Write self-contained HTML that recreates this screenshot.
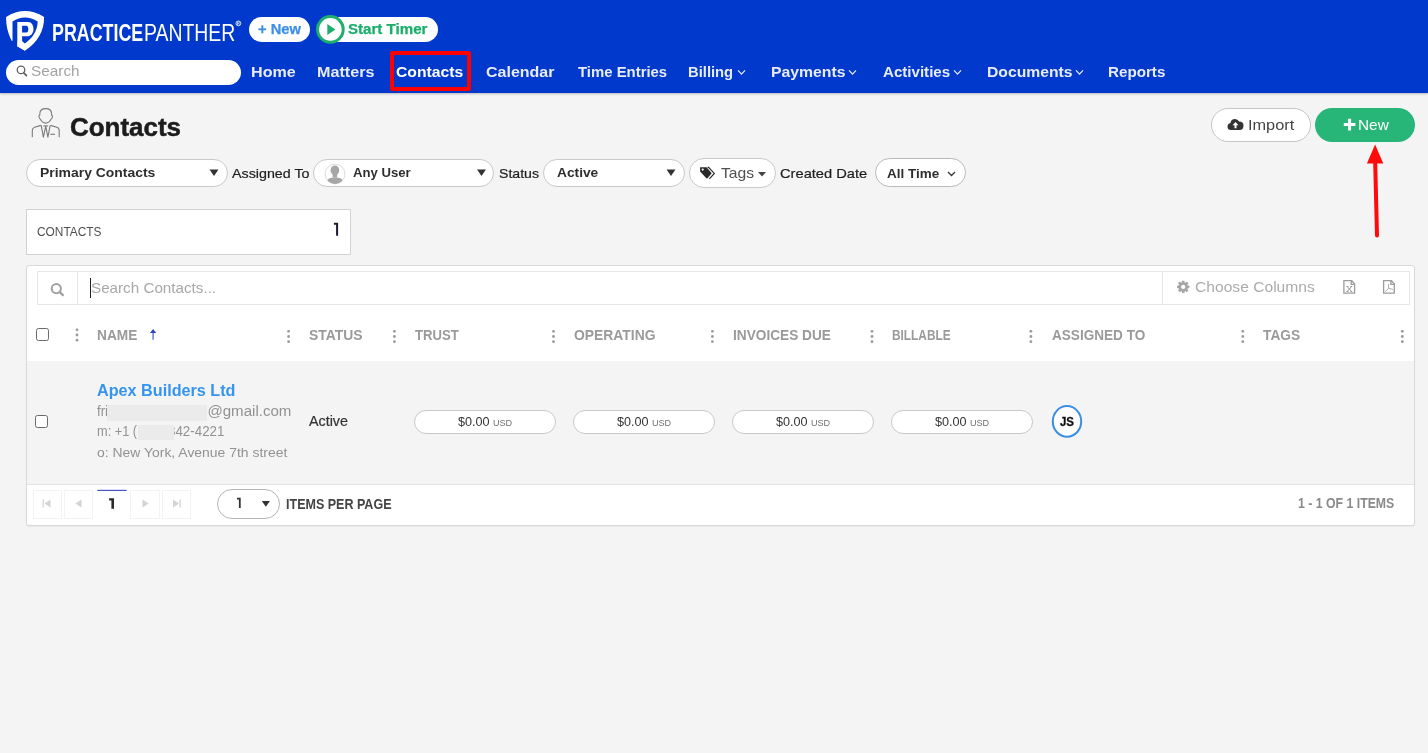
<!DOCTYPE html>
<html><head><meta charset="utf-8"><title>Contacts</title>
<style>
html,body{margin:0;padding:0;}
body{width:1428px;height:753px;overflow:hidden;position:relative;background:#f4f4f4;font-family:"Liberation Sans", sans-serif;}
.t{position:absolute;white-space:nowrap;transform-origin:0 0;}
.a{position:absolute;box-sizing:border-box;}
</style></head><body>
<!-- header -->
<div class="a" style="left:0;top:0;width:1428px;height:93px;background:#0039cb;box-shadow:0 1px 2px rgba(0,0,0,0.25);"></div>
<svg class="a" style="left:0;top:0" width="250" height="93" viewBox="0 0 250 93">
  <path d="M6.1 16.9 Q25 5.2 44.1 16.9 C44.3 31 37.5 42.5 24.9 50.7 L17.3 46.2 L17.3 41 L11.9 41 C7.8 33 6.1 26 6.1 16.9 Z" fill="#fff"/>
  <path d="M12.5 21.4 Q24.9 13.8 37.7 21.4 C37.5 31 32 38.5 24.9 43.4 L22.1 41.3 L17.3 41.3 L17.3 47 L12.5 47 Z" fill="#0039cb"/>
  <path d="M17.3 22 L28 22 C31.6 22 33.5 25.3 33.5 29 C33.5 33 31 36.3 27.2 36.3 L22.1 36.3 L22.1 46.5 L17.3 46.5 Z M22.1 25.8 L22.1 32.5 L26.3 32.5 C27.7 32.5 28.3 31.2 28.3 29.2 C28.3 27.2 27.7 25.8 26.3 25.8 Z" fill="#fff" fill-rule="evenodd"/>
  <path d="M17.3 46.2 L24.9 50.7 L22.1 41.3 Z" fill="#fff"/>
  <circle cx="238.4" cy="23.4" r="2.4" fill="none" stroke="#fff" stroke-width="0.8"/>
  <path d="M237.5 25 L237.5 21.9 L238.6 21.9 Q239.5 21.9 239.5 22.7 Q239.5 23.5 238.6 23.5 L237.5 23.5 M238.6 23.5 L239.5 25" fill="none" stroke="#fff" stroke-width="0.6"/>
</svg>
<div class="a" style="left:249px;top:17px;width:61px;height:25px;border-radius:13px;background:#fff;"></div>
<div class="a" style="left:322px;top:17px;width:116px;height:25px;border-radius:13px;background:#fff;"></div>
<svg class="a" style="left:314px;top:13px" width="34" height="34" viewBox="0 0 34 34">
  <circle cx="16.4" cy="16.4" r="12.8" fill="#fff" stroke="#1fae6c" stroke-width="3"/>
  <path d="M13.3 10.9 L21.5 16.4 L13.3 22 Z" fill="#1fae6c"/>
</svg>
<div class="a" style="left:6px;top:60px;width:235px;height:25px;border-radius:13px;background:#fff;"></div>
<svg class="a" style="left:0;top:55px" width="40" height="30" viewBox="0 55 40 30">
  <circle cx="21" cy="69.9" r="3.75" fill="none" stroke="#606060" stroke-width="1.3"/>
  <path d="M23.8 72.8 L26.5 75.6" stroke="#606060" stroke-width="1.7" stroke-linecap="round"/>
</svg>
<div class="a" style="left:390px;top:51px;width:81px;height:40px;border:4px solid #ff0000;border-radius:2px;"></div>
<svg class="a" style="left:0;top:0" width="1428" height="93" viewBox="0 0 1428 93">
  <g fill="none" stroke="#e8ecf8" stroke-width="1.3">
    <path d="M738 70.4 L741.5 74.1 L745 70.4"/>
    <path d="M849 70.4 L852.5 74.1 L856 70.4"/>
    <path d="M954 70.4 L957.5 74.1 L961 70.4"/>
    <path d="M1076 70.4 L1079.5 74.1 L1083 70.4"/>
  </g>
</svg>
<!-- title icon -->
<svg class="a" style="left:26px;top:104px" width="40" height="40" viewBox="26 104 40 40">
  <g fill="none" stroke="#7a7a7a" stroke-width="1.1" stroke-linejoin="round">
    <path d="M45.7 108.6 C49.4 108.6 51.6 110.8 51.6 114 L51.6 115.2 Q52.9 115.6 52.3 117.4 Q51.8 118.8 51 119.3 Q49 123.1 45.7 123.1 Q42.4 123.1 40.4 119.3 Q39.6 118.8 39.1 117.4 Q38.5 115.6 39.8 115.2 L39.8 114 C39.8 110.8 42 108.6 45.7 108.6 Z"/>
    <path d="M40.9 125.4 L34.6 127.3 Q32.3 128.1 32.3 130.6 L32.3 137.2"/>
    <path d="M50.5 125.4 L56.8 127.3 Q59.2 128.1 59.2 130.6 L59.2 137.2"/>
    <path d="M41.2 125.4 L43.4 137.2 L45.7 126.2 L47.9 137.2 L50.2 125.4"/>
    <path d="M43.3 125.9 L48.1 125.9"/>
    <path d="M50.3 134.3 L55 134.3"/>
  </g>
</svg>
<!-- filters -->
<div class="a" style="left:26px;top:159px;width:202px;height:28px;border:1px solid #c9c9c9;border-radius:14px;background:#fff;"></div>
<div class="a" style="left:313px;top:159px;width:181px;height:28px;border:1px solid #c9c9c9;border-radius:14px;background:#fff;"></div>
<div class="a" style="left:543px;top:159px;width:142px;height:28px;border:1px solid #c9c9c9;border-radius:14px;background:#fff;"></div>
<div class="a" style="left:689px;top:158px;width:87px;height:30px;border:1px solid #c9c9c9;border-radius:15px;background:#fff;"></div>
<div class="a" style="left:875px;top:158px;width:91px;height:29px;border:1px solid #b9b9b9;border-radius:15px;background:#fff;"></div>
<svg class="a" style="left:0;top:150px" width="1000" height="45" viewBox="0 150 1000 45">
  <path d="M209.5 169.5 L218.5 169.5 L214 176 Z" fill="#333"/>
  <path d="M477 169.5 L486 169.5 L481.5 176 Z" fill="#333"/>
  <path d="M666.5 169.5 L675.5 169.5 L671 176 Z" fill="#333"/>
  <path d="M758 172 L766 172 L762 176.5 Z" fill="#444"/>
  <path d="M948 172 L951.5 175.5 L955 172" fill="none" stroke="#333" stroke-width="1.3"/>
  <!-- avatar -->
  <circle cx="335" cy="174" r="9.9" fill="#fff" stroke="#d8d8d8" stroke-width="0.9"/>
  <g fill="#a6a6a6">
    <ellipse cx="334.9" cy="170.3" rx="4.3" ry="4.9"/>
    <path d="M332.3 172 L337.5 172 L337 177.5 L332.8 177.5 Z"/>
    <path d="M327.3 179.9 Q328.9 177.8 332.6 177.4 L337.4 177.4 Q341.1 177.8 342.7 179.9 A9.4 9.4 0 0 1 327.3 179.9 Z"/>
  </g>
  <!-- tag icon -->
  <path d="M700.1 167.3 L706.6 167.3 L711.7 173.2 L707.3 178.4 Q707 178.8 706.6 178.4 L700.1 171.4 Z" fill="#2a2a2a"/>
  <circle cx="702.7" cy="169.6" r="1.1" fill="#fff"/>
  <path d="M707.6 167.3 L708.6 167.3 L714.3 173.4 L709.4 178.8" fill="none" stroke="#2a2a2a" stroke-width="1.2"/>
</svg>
<!-- action buttons -->
<div class="a" style="left:1211px;top:108px;width:100px;height:34px;border:1px solid #c5c5c5;border-radius:17px;background:#fff;"></div>
<div class="a" style="left:1315px;top:108px;width:100px;height:34px;border-radius:17px;background:#28b678;"></div>
<svg class="a" style="left:1220px;top:110px" width="200" height="30" viewBox="1220 110 200 30">
  <path d="M1231 130 Q1227.5 130 1227.5 126.5 Q1227.5 123.5 1230.5 123 Q1231 119 1235 119 Q1238 119 1239 121.5 Q1243.5 121.5 1243.5 125.5 Q1243.5 130 1239.5 130 Z" fill="#333"/>
  <path d="M1235.5 122 L1232.5 125.2 L1234.5 125.2 L1234.5 128.2 L1236.5 128.2 L1236.5 125.2 L1238.5 125.2 Z" fill="#fff"/>
  <path d="M1343.8 124.6 L1355.4 124.6 M1349.6 118.8 L1349.6 130.4" stroke="#fff" stroke-width="3"/>
</svg>
<!-- red arrow -->
<svg class="a" style="left:1350px;top:140px" width="50" height="105" viewBox="1350 140 50 105">
  <path d="M1375.2 163 L1377 235.5" stroke="#ff0a0a" stroke-width="4" stroke-linecap="round"/>
  <path d="M1375.1 144.5 L1383.3 163.6 L1366.9 163.6 Z" fill="#ff0a0a"/>
</svg>
<!-- counter -->
<div class="a" style="left:26px;top:209px;width:325px;height:46px;border:1px solid #d2d2d2;background:#fff;"></div>
<!-- panel -->
<div class="a" style="left:26px;top:265px;width:1389px;height:261px;border:1px solid #d9d9d9;border-radius:3px;background:#fff;box-shadow:0 1px 1px rgba(0,0,0,0.05);"></div>
<div class="a" style="left:37px;top:271px;width:1373px;height:34px;border:1px solid #e6e6e6;"></div>
<div class="a" style="left:77px;top:272px;width:1px;height:32px;background:#e6e6e6;"></div>
<div class="a" style="left:1162px;top:272px;width:1px;height:32px;background:#e6e6e6;"></div>
<div class="a" style="left:90px;top:278px;width:1.3px;height:20px;background:#222;"></div>
<svg class="a" style="left:0;top:265px" width="1428" height="270" viewBox="0 265 1428 270">
  <!-- search icon -->
  <circle cx="56.3" cy="288.6" r="4.6" fill="none" stroke="#a0a0a0" stroke-width="2"/>
  <path d="M59.8 292.1 L62.8 295.1" stroke="#a0a0a0" stroke-width="2.2" stroke-linecap="round"/>
  <!-- gear -->
  <g transform="translate(1183.2 286.9)" fill="#a6a6a6">
    <circle r="4.6"/>
    <rect x="-1.35" y="-6.2" width="2.7" height="12.4" rx="0.4"/>
    <rect x="-1.35" y="-6.2" width="2.7" height="12.4" rx="0.4" transform="rotate(45)"/>
    <rect x="-1.35" y="-6.2" width="2.7" height="12.4" rx="0.4" transform="rotate(90)"/>
    <rect x="-1.35" y="-6.2" width="2.7" height="12.4" rx="0.4" transform="rotate(135)"/>
    <circle r="2.1" fill="#fff"/>
  </g>
  <!-- excel icon -->
  <g fill="none" stroke="#9c9c9c" stroke-width="1.3" stroke-linejoin="miter">
    <path d="M1343.9 280.7 L1351.7 280.7 L1354.6 283.8 L1354.6 293.1 L1343.9 293.1 Z M1351.2 280.7 L1351.2 284.3 L1354.6 284.3"/>
    <path d="M1383.6 280.7 L1391.4 280.7 L1394.3 283.8 L1394.3 293.1 L1383.6 293.1 Z M1390.9 280.7 L1390.9 284.3 L1394.3 284.3"/>
  </g>
  <g fill="none" stroke="#8c8c8c" stroke-width="0.9">
    <path d="M1347.2 286.5 L1351.6 291.5 M1351.6 286.5 L1347.2 291.5 M1346.5 286.5 L1348.3 286.5 M1350.5 286.5 L1352.2 286.5 M1346.5 291.5 L1348.3 291.5 M1350.5 291.5 L1352.2 291.5"/>
    <path d="M1388.6 283.8 L1388.6 288.3 L1385.3 291.6 M1388.6 288.3 L1393 289.5" stroke="#a0a0a0"/>
  </g>
  <!-- header checkbox -->
  <rect x="36.5" y="328.5" width="12" height="12" rx="2" fill="#fff" stroke="#6a6a6a" stroke-width="1"/>
  <!-- kebabs -->
  <g fill="#9a9a9a">
    <circle cx="77" cy="329.8" r="1.4"/><circle cx="77" cy="335" r="1.4"/><circle cx="77" cy="340.2" r="1.4"/>
  </g>
  <g fill="#9a9a9a">
<circle cx="288.6" cy="331.3" r="1.4"/><circle cx="288.6" cy="336.5" r="1.4"/><circle cx="288.6" cy="341.7" r="1.4"/>
<circle cx="394.4" cy="331.3" r="1.4"/><circle cx="394.4" cy="336.5" r="1.4"/><circle cx="394.4" cy="341.7" r="1.4"/>
<circle cx="553.5" cy="331.3" r="1.4"/><circle cx="553.5" cy="336.5" r="1.4"/><circle cx="553.5" cy="341.7" r="1.4"/>
<circle cx="712.4" cy="331.3" r="1.4"/><circle cx="712.4" cy="336.5" r="1.4"/><circle cx="712.4" cy="341.7" r="1.4"/>
<circle cx="872" cy="331.3" r="1.4"/><circle cx="872" cy="336.5" r="1.4"/><circle cx="872" cy="341.7" r="1.4"/>
<circle cx="1030.9" cy="331.3" r="1.4"/><circle cx="1030.9" cy="336.5" r="1.4"/><circle cx="1030.9" cy="341.7" r="1.4"/>
<circle cx="1242.8" cy="331.3" r="1.4"/><circle cx="1242.8" cy="336.5" r="1.4"/><circle cx="1242.8" cy="341.7" r="1.4"/>
<circle cx="1402.3" cy="331.3" r="1.4"/><circle cx="1402.3" cy="336.5" r="1.4"/><circle cx="1402.3" cy="341.7" r="1.4"/>
</g>
  <!-- sort arrow -->
  <path d="M153.1 339.8 L153.1 332" stroke="#4a5ad0" stroke-width="1.2"/>
  <path d="M149.9 332.9 L153.1 328.9 L156.3 332.9 Z" fill="#3344bb"/>
</svg>
<!-- data row -->
<div class="a" style="left:27px;top:361px;width:1387px;height:124px;background:#f4f4f4;border-bottom:1px solid #e3e3e3;"></div>
<svg class="a" style="left:0;top:360px" width="1428" height="170" viewBox="0 360 1428 170">
  <rect x="35.5" y="415.5" width="12" height="12" rx="2" fill="#fff" stroke="#6a6a6a" stroke-width="1"/>
  <g fill="#fff" stroke="#c8c8c8" stroke-width="1">
    <rect x="414.5" y="410.5" width="141" height="23" rx="11.5"/>
    <rect x="573.5" y="410.5" width="141" height="23" rx="11.5"/>
    <rect x="732.5" y="410.5" width="141" height="23" rx="11.5"/>
    <rect x="891.5" y="410.5" width="141" height="23" rx="11.5"/>
  </g>
  <ellipse cx="1067" cy="421.4" rx="14.2" ry="15.3" fill="#fff" stroke="#3a8ee0" stroke-width="2"/>
  <!-- pager -->
  <g fill="#fff" stroke="#f3f3f3" stroke-width="1">
    <rect x="33.5" y="490.5" width="28" height="28"/>
    <rect x="64.5" y="490.5" width="28" height="28"/>
    <rect x="130.5" y="490.5" width="29" height="28"/>
    <rect x="162.5" y="490.5" width="28" height="28"/>
  </g>
  <rect x="97.3" y="489.8" width="29.3" height="1.1" fill="#3346c0"/>
  <g fill="#d4d4d4">
    <rect x="42.5" y="499.5" width="1.3" height="8"/><path d="M50.5 499.5 L50.5 507.5 L44.5 503.5 Z"/>
    <path d="M81.5 499.5 L81.5 507.5 L75.5 503.5 Z"/>
    <path d="M142.5 499.5 L142.5 507.5 L148.5 503.5 Z"/>
    <path d="M173 499.5 L173 507.5 L179 503.5 Z"/><rect x="179.5" y="499.5" width="1.3" height="8"/>
  </g>
  <rect x="217.5" y="489.5" width="62" height="29" rx="14.5" fill="#fff" stroke="#b5b5b5" stroke-width="1"/>
  <path d="M261.8 501 L269.9 501 L265.85 506.8 Z" fill="#333"/>
</svg>

<span class="t" style="left:51.76px;top:21.00px;font-size:24px;line-height:24px;font-weight:700;color:#fff;transform:scaleX(0.7439);">PRACTICE</span>
<span class="t" style="left:143.69px;top:21.00px;font-size:24px;line-height:24px;font-weight:400;color:#fff;transform:scaleX(0.8085);">PANTHER</span>
<span class="t" style="left:257.70px;top:22.00px;font-size:14.2px;line-height:14.2px;font-weight:700;color:#3d8fe6;transform:scaleX(1.0363);-webkit-text-stroke:0.25px #3d8fe6;">+ New</span>
<span class="t" style="left:348.00px;top:22.00px;font-size:14px;line-height:14px;font-weight:700;color:#1aae6b;transform:scaleX(1.0780);-webkit-text-stroke:0.25px #1aae6b;">Start Timer</span>
<span class="t" style="left:31.20px;top:64.00px;font-size:14.5px;line-height:14.5px;font-weight:400;color:#a3a3a3;transform:scaleX(1.0571);">Search</span>
<span class="t" style="left:250.73px;top:64.00px;font-size:15px;line-height:15px;font-weight:700;color:#e8ecf8;transform:scaleX(1.0736);">Home</span>
<span class="t" style="left:316.52px;top:64.00px;font-size:15px;line-height:15px;font-weight:700;color:#e8ecf8;transform:scaleX(1.0768);">Matters</span>
<span class="t" style="left:396.30px;top:64.00px;font-size:15px;line-height:15px;font-weight:700;color:#ffffff;transform:scaleX(1.0481);">Contacts</span>
<span class="t" style="left:486.00px;top:64.00px;font-size:15px;line-height:15px;font-weight:700;color:#e8ecf8;transform:scaleX(1.0660);">Calendar</span>
<span class="t" style="left:577.80px;top:64.00px;font-size:15px;line-height:15px;font-weight:700;color:#e8ecf8;transform:scaleX(0.9931);">Time Entries</span>
<span class="t" style="left:688.31px;top:64.00px;font-size:15px;line-height:15px;font-weight:700;color:#e8ecf8;transform:scaleX(0.9851);">Billing</span>
<span class="t" style="left:770.65px;top:64.00px;font-size:15px;line-height:15px;font-weight:700;color:#e8ecf8;transform:scaleX(1.0514);">Payments</span>
<span class="t" style="left:882.80px;top:64.00px;font-size:15px;line-height:15px;font-weight:700;color:#e8ecf8;transform:scaleX(1.0068);">Activities</span>
<span class="t" style="left:986.55px;top:64.00px;font-size:15px;line-height:15px;font-weight:700;color:#e8ecf8;transform:scaleX(1.0468);">Documents</span>
<span class="t" style="left:1108.29px;top:64.00px;font-size:15px;line-height:15px;font-weight:700;color:#e8ecf8;transform:scaleX(1.0121);">Reports</span>
<span class="t" style="left:69.99px;top:115.00px;font-size:25.6px;line-height:25.6px;font-weight:700;color:#1c1c1c;transform:scaleX(1.0142);-webkit-text-stroke:0.5px #1c1c1c;">Contacts</span>
<span class="t" style="left:40.00px;top:166.00px;font-size:13.2px;line-height:13.2px;font-weight:700;color:#2e2e2e;transform:scaleX(1.0563);">Primary Contacts</span>
<span class="t" style="left:232.00px;top:167.00px;font-size:13.5px;line-height:13.5px;font-weight:400;color:#1c1c1c;transform:scaleX(1.0570);-webkit-text-stroke:0.2px #1c1c1c;">Assigned To</span>
<span class="t" style="left:353.40px;top:166.00px;font-size:13px;line-height:13px;font-weight:700;color:#2e2e2e;transform:scaleX(1.0102);">Any User</span>
<span class="t" style="left:499.10px;top:167.00px;font-size:13.5px;line-height:13.5px;font-weight:400;color:#1c1c1c;transform:scaleX(1.0462);-webkit-text-stroke:0.2px #1c1c1c;">Status</span>
<span class="t" style="left:557.10px;top:166.00px;font-size:13px;line-height:13px;font-weight:700;color:#2e2e2e;transform:scaleX(1.0570);">Active</span>
<span class="t" style="left:720.60px;top:165.00px;font-size:15px;line-height:15px;font-weight:400;color:#505050;transform:scaleX(1.0454);">Tags</span>
<span class="t" style="left:779.60px;top:167.00px;font-size:13.5px;line-height:13.5px;font-weight:400;color:#1c1c1c;transform:scaleX(1.0866);-webkit-text-stroke:0.2px #1c1c1c;">Created Date</span>
<span class="t" style="left:887.20px;top:167.00px;font-size:13.3px;line-height:13.3px;font-weight:700;color:#2e2e2e;transform:scaleX(1.0140);">All Time</span>
<span class="t" style="left:1247.61px;top:117.00px;font-size:15px;line-height:15px;font-weight:400;color:#444;transform:scaleX(1.0864);">Import</span>
<span class="t" style="left:1357.58px;top:117.00px;font-size:15px;line-height:15px;font-weight:400;color:#fff;transform:scaleX(1.0249);">New</span>
<span class="t" style="left:37.20px;top:226.00px;font-size:12.3px;line-height:12.3px;font-weight:400;color:#4f4f4f;transform:scaleX(0.9667);">CONTACTS</span>
<span class="t" style="left:91.00px;top:281.00px;font-size:14.5px;line-height:14.5px;font-weight:400;color:#a8a8a8;transform:scaleX(1.0486);">Search Contacts...</span>
<span class="t" style="left:1194.80px;top:279.00px;font-size:15px;line-height:15px;font-weight:400;color:#ababab;transform:scaleX(1.0414);">Choose Columns</span>
<span class="t" style="left:97.40px;top:328.00px;font-size:14.5px;line-height:14.5px;font-weight:700;color:#9a9a9a;transform:scaleX(0.9437);">NAME</span>
<span class="t" style="left:309.00px;top:328.00px;font-size:14.5px;line-height:14.5px;font-weight:700;color:#9a9a9a;transform:scaleX(0.9577);">STATUS</span>
<span class="t" style="left:415.30px;top:328.00px;font-size:14.5px;line-height:14.5px;font-weight:700;color:#9a9a9a;transform:scaleX(0.9057);">TRUST</span>
<span class="t" style="left:573.80px;top:328.00px;font-size:14.5px;line-height:14.5px;font-weight:700;color:#9a9a9a;transform:scaleX(0.9570);">OPERATING</span>
<span class="t" style="left:732.90px;top:328.00px;font-size:14.5px;line-height:14.5px;font-weight:700;color:#9a9a9a;transform:scaleX(0.9418);">INVOICES DUE</span>
<span class="t" style="left:892.40px;top:328.00px;font-size:14.5px;line-height:14.5px;font-weight:700;color:#9a9a9a;transform:scaleX(0.8179);">BILLABLE</span>
<span class="t" style="left:1051.70px;top:328.00px;font-size:14.5px;line-height:14.5px;font-weight:700;color:#9a9a9a;transform:scaleX(0.9360);">ASSIGNED TO</span>
<span class="t" style="left:1263.20px;top:328.00px;font-size:14.5px;line-height:14.5px;font-weight:700;color:#9a9a9a;transform:scaleX(0.9486);">TAGS</span>
<span class="t" style="left:97.00px;top:382.00px;font-size:16.2px;line-height:16.2px;font-weight:700;color:#3694ee;transform:scaleX(0.9998);">Apex Builders Ltd</span>
<span class="t" style="left:96.60px;top:404.00px;font-size:14px;line-height:14px;font-weight:400;color:#929292;transform:scaleX(0.9500);">fri</span>
<span class="t" style="left:199.00px;top:404.00px;font-size:14px;line-height:14px;font-weight:400;color:#929292;transform:scaleX(1.0772);">o@gmail.com</span>
<span class="t" style="left:96.60px;top:424.00px;font-size:14px;line-height:14px;font-weight:400;color:#929292;transform:scaleX(0.9121);">m: +1 (</span>
<span class="t" style="left:168.00px;top:424.00px;font-size:14px;line-height:14px;font-weight:400;color:#929292;transform:scaleX(0.9532);">342-4221</span>
<span class="t" style="left:97.00px;top:446.00px;font-size:13.5px;line-height:13.5px;font-weight:400;color:#929292;transform:scaleX(1.0323);">o: New York, Avenue 7th street</span>
<span class="t" style="left:308.80px;top:414.00px;font-size:14px;line-height:14px;font-weight:400;color:#333;transform:scaleX(1.0225);-webkit-text-stroke:0.2px #333;">Active</span>
<span class="t" style="left:458.40px;top:415.00px;font-size:13px;line-height:13px;font-weight:400;color:#333;transform:scaleX(0.9721);">$0.00</span>
<span class="t" style="left:493.20px;top:418.00px;font-size:9.5px;line-height:9.5px;font-weight:400;color:#6f6f6f;transform:scaleX(0.9556);">USD</span>
<span class="t" style="left:617.30px;top:415.00px;font-size:13px;line-height:13px;font-weight:400;color:#333;transform:scaleX(0.9721);">$0.00</span>
<span class="t" style="left:652.10px;top:418.00px;font-size:9.5px;line-height:9.5px;font-weight:400;color:#6f6f6f;transform:scaleX(0.9556);">USD</span>
<span class="t" style="left:776.10px;top:415.00px;font-size:13px;line-height:13px;font-weight:400;color:#333;transform:scaleX(0.9721);">$0.00</span>
<span class="t" style="left:810.90px;top:418.00px;font-size:9.5px;line-height:9.5px;font-weight:400;color:#6f6f6f;transform:scaleX(0.9556);">USD</span>
<span class="t" style="left:935.10px;top:415.00px;font-size:13px;line-height:13px;font-weight:400;color:#333;transform:scaleX(0.9721);">$0.00</span>
<span class="t" style="left:969.90px;top:418.00px;font-size:9.5px;line-height:9.5px;font-weight:400;color:#6f6f6f;transform:scaleX(0.9556);">USD</span>
<span class="t" style="left:1060.00px;top:416.00px;font-size:12px;line-height:12px;font-weight:700;color:#111;transform:scaleX(0.9541);-webkit-text-stroke:0.3px #111;">JS</span>
<span class="t" style="left:286.20px;top:497.00px;font-size:14px;line-height:14px;font-weight:700;color:#444;transform:scaleX(0.8942);">ITEMS PER PAGE</span>
<span class="t" style="left:1297.50px;top:496.00px;font-size:14px;line-height:14px;font-weight:700;color:#8a8a8a;transform:scaleX(0.8779);">1 - 1 OF 1 ITEMS</span>
<!-- blurred redactions -->
<div class="a" style="left:107px;top:405px;width:100px;height:15.5px;background:#ebebeb;filter:blur(0.6px);"></div>
<div class="a" style="left:137.5px;top:425px;width:36.5px;height:14.5px;background:#ebebeb;filter:blur(0.6px);"></div>
<svg class="a" style="left:0;top:210px" width="400" height="310" viewBox="0 210 400 310">
  <path d="M333.9 222.8 L338.1 222.8 L338.1 235.8 L336.1 235.8 L336.1 224.8 L333.9 224.8 Z" fill="#1a1a2e"/>
  <path d="M109.1 498.3 L114 498.3 L114 508.8 L111.4 508.8 L111.4 500.5 L109.1 500.5 Z" fill="#2a2a2a"/>
  <path d="M237 497.8 L240.7 497.8 L240.7 508.1 L238.9 508.1 L238.9 499.5 L237 499.5 Z" fill="#333"/>
</svg>

</body></html>
